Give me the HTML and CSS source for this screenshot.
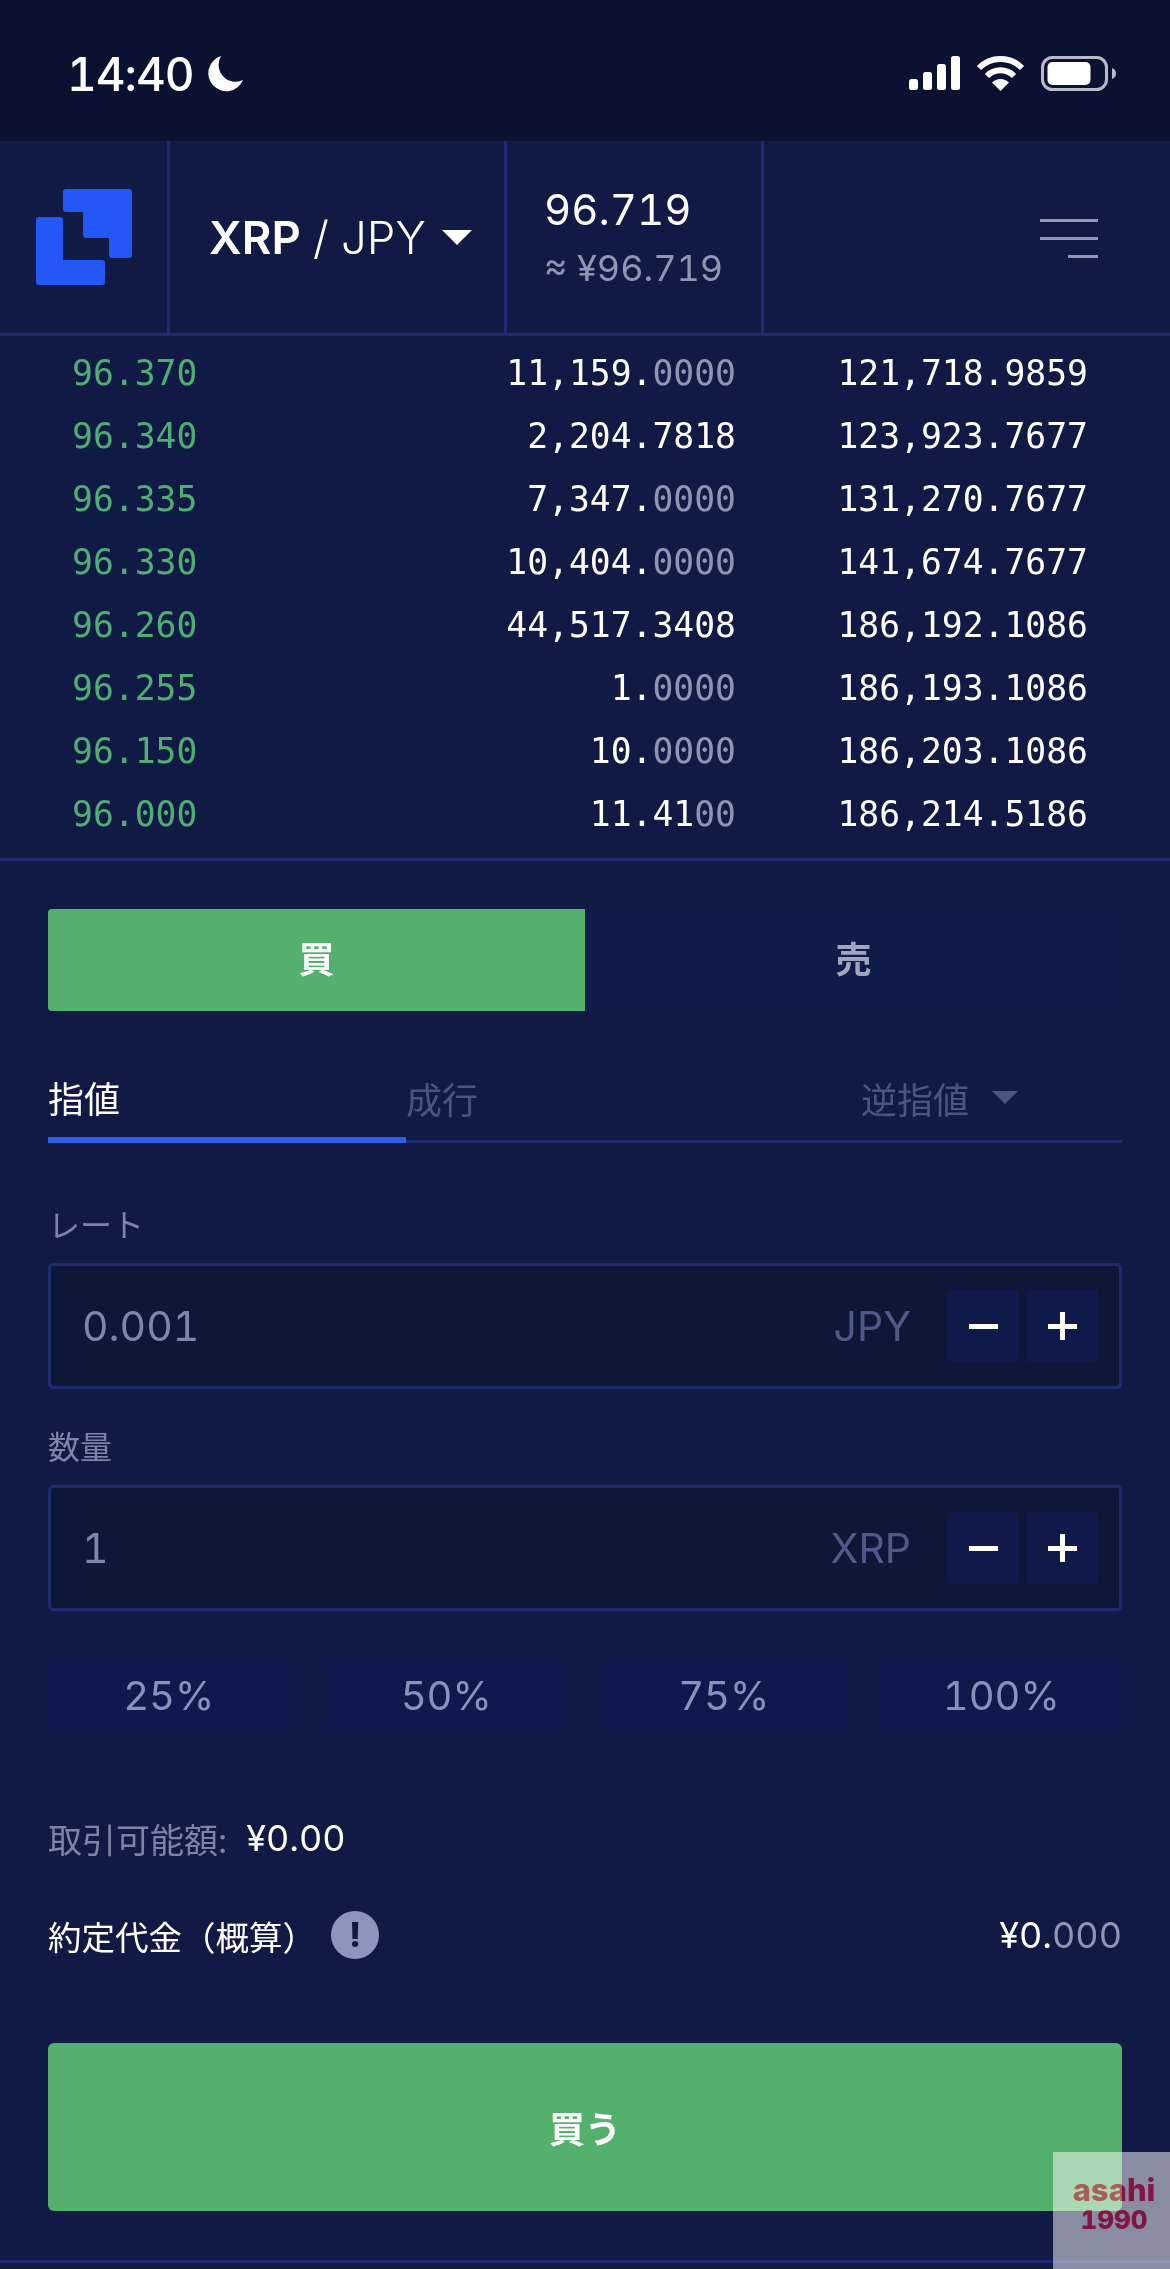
FILE: index.html
```html
<!DOCTYPE html>
<html lang="ja">
<head>
    <meta charset="UTF-8">
    <meta name="viewport" content="width=device-width, initial-scale=1.0">
    <title>XRP / JPY</title>
    <link rel="stylesheet" href="styles.css">
</head>
<body>
    <!-- Status bar -->
    <div class="status-bar">
        <div class="status-left">
            <span class="clock">14:40</span>
            <svg class="moon" width="36" height="36" viewBox="0 0 36 36"><path fill="#fff" d="M14 0A18 18 0 1 0 36 24A17 17 0 0 1 14 0Z"/></svg>
        </div>
        <div class="status-right">
            <svg width="51" height="34" viewBox="0 0 51 34" fill="#fff">
                <rect x="0" y="23" width="9" height="11" rx="2.5"/>
                <rect x="14" y="16" width="9" height="18" rx="2.5"/>
                <rect x="28" y="8" width="9" height="26" rx="2.5"/>
                <rect x="42" y="0" width="9" height="34" rx="2.5"/>
            </svg>
            <svg class="wifi" width="49" height="36" viewBox="0 0 49 36" fill="none" stroke="#fff">
                <path stroke-width="6" d="M3 13A30 30 0 0 1 46 13"/>
                <path stroke-width="6" d="M11 21A19 19 0 0 1 38 21"/>
                <path fill="#fff" stroke="none" d="M24.5 36L16 27.5A12 12 0 0 1 33 27.5Z"/>
            </svg>
            <svg class="battery" width="75" height="35" viewBox="0 0 75 35">
                <rect x="1.5" y="1.5" width="64" height="32" rx="10" fill="none" stroke="#b9bcc8" stroke-width="3"/>
                <rect x="6.5" y="6" width="43" height="23" rx="5" fill="#fff"/>
                <path fill="#b9bcc8" d="M71 12C74 13 75 15 75 17.500C75 20 74 22 71 23Z"/>
            </svg>
        </div>
    </div>

    <!-- Header -->
    <header class="top-bar">
        <div class="logo-cell">
            <svg width="96" height="96" viewBox="0 0 96 96" fill="#2458f6" stroke="#2458f6" stroke-width="6" stroke-linejoin="round">
                <path d="M30 3H93V66H76V46H50V20H30Z"/>
                <path d="M3 31H24V74H66V93H3Z"/>
            </svg>
        </div>
        <div class="pair-cell">
            <span class="pair"><b>XRP</b> / JPY</span>
            <span class="caret"></span>
        </div>
        <div class="price-cell">
            <div class="price">96.719</div>
            <div class="price-sub">≈ ¥96.719</div>
        </div>
        <div class="menu-cell">
            <span class="menu-line"></span>
            <span class="menu-line"></span>
            <span class="menu-line short"></span>
        </div>
    </header>

    <!-- Order book -->
    <div class="book">
        <div class="book-row"><span class="rate">96.370</span><span class="qty">11,159.<i>0000</i></span><span class="total">121,718.9859</span></div>
        <div class="book-row"><span class="rate">96.340</span><span class="qty">2,204.7818</span><span class="total">123,923.7677</span></div>
        <div class="book-row"><span class="rate">96.335</span><span class="qty">7,347.<i>0000</i></span><span class="total">131,270.7677</span></div>
        <div class="book-row"><span class="rate">96.330</span><span class="qty">10,404.<i>0000</i></span><span class="total">141,674.7677</span></div>
        <div class="book-row"><span class="rate">96.260</span><span class="qty">44,517.3408</span><span class="total">186,192.1086</span></div>
        <div class="book-row"><span class="rate">96.255</span><span class="qty">1.<i>0000</i></span><span class="total">186,193.1086</span></div>
        <div class="book-row"><span class="rate">96.150</span><span class="qty">10.<i>0000</i></span><span class="total">186,203.1086</span></div>
        <div class="book-row"><span class="rate">96.000</span><span class="qty">11.41<i>00</i></span><span class="total">186,214.5186</span></div>
    </div>

    <!-- Order form -->
    <main class="order">
        <div class="side-switch">
            <div class="side active">買</div>
            <div class="side">売</div>
        </div>

        <div class="type-tabs">
            <div class="type-tab current">指値</div>
            <div class="type-tab market">成行</div>
            <div class="type-tab stop">逆指値<span class="caret dim"></span></div>
        </div>

        <div class="field-label rate-label">レート</div>
        <div class="field">
            <span class="field-value">0.001</span>
            <span class="field-unit">JPY</span>
            <span class="step"><span class="minus"></span></span>
            <span class="step"><span class="plus"></span></span>
        </div>

        <div class="field-label qty-label">数量</div>
        <div class="field">
            <span class="field-value">1</span>
            <span class="field-unit">XRP</span>
            <span class="step"><span class="minus"></span></span>
            <span class="step"><span class="plus"></span></span>
        </div>

        <div class="percents">
            <div class="percent">25%</div>
            <div class="percent">50%</div>
            <div class="percent">75%</div>
            <div class="percent">100%</div>
        </div>

        <div class="available"><span class="available-label">取引可能額:</span><span class="available-value">¥0.00</span></div>

        <div class="estimate">
            <span class="estimate-label">約定代金（概算）</span>
            <span class="info">!</span>
            <span class="estimate-value">¥0.<i>000</i></span>
        </div>

        <button class="buy-btn" type="button">買う</button>
    </main>

    <div class="watermark"><span>asahi</span><span class="year">1990</span></div>
</body>
</html>
```

FILE: styles.css
```css
* {
    box-sizing: border-box;
}
body {
    margin: 0;
    height: 2269px;
    overflow: hidden;
    position: relative;
    background-color: #111a44;
    color: #fff;
    font-family: Inter, "Noto Sans CJK JP", sans-serif;
    font-feature-settings: "tnum";
}
i {
    font-style: normal;
    color: #8f96b3;
}

/* status bar */
.status-bar {
    height: 141px;
    background-color: #0b1130;
    display: flex;
    justify-content: space-between;
    align-items: flex-start;
    padding: 55px 54px 0 67px;
}
.status-left {
    display: flex;
    align-items: center;
    gap: 13px;
}
.clock {
    font-size: 46px;
    font-weight: 500;
    line-height: 38px;
    letter-spacing: -1px;
}
.status-right {
    display: flex;
    align-items: flex-start;
    gap: 16px;
    padding-top: 1px;
}
.wifi {
    margin-top: -1px;
}

/* header */
.top-bar {
    height: 195px;
    display: flex;
    border-bottom: 3px solid #1f2a70;
}
.logo-cell {
    flex: none;
    width: 170px;
    border-right: 3px solid #1f2a70;
    padding: 48px 0 0 36px;
}
.pair-cell {
    flex: none;
    width: 337px;
    border-right: 3px solid #1f2a70;
    padding-left: 39px;
    display: flex;
    align-items: center;
}
.pair {
    font-size: 45.5px;
    font-weight: 300;
    white-space: nowrap;
}
.pair b {
    font-weight: 600;
}
.caret {
    width: 0;
    height: 0;
    margin-left: 16px;
    border-left: 15px solid transparent;
    border-right: 15px solid transparent;
    border-top: 15px solid #fff;
}
.caret.dim {
    margin-left: 23px;
    border-left-width: 13px;
    border-right-width: 13px;
    border-top: 13px solid #4b557f;
}
.price-cell {
    flex: none;
    width: 257px;
    border-right: 3px solid #1f2a70;
    padding: 44px 0 0 37px;
}
.price {
    font-size: 42px;
    line-height: 50px;
}
.price-sub {
    font-size: 36px;
    line-height: 44px;
    margin-top: 11px;
    color: #8f96b3;
    white-space: nowrap;
}
.menu-cell {
    flex: 1;
    display: flex;
    flex-direction: column;
    align-items: flex-end;
    gap: 15px;
    padding: 78px 72px 0 0;
}
.menu-line {
    display: block;
    width: 58px;
    height: 3px;
    background-color: #9097b5;
}
.menu-line.short {
    width: 30px;
}

/* order book */
.book {
    height: 525px;
    padding-top: 6px;
    border-bottom: 3px solid #1f2a70;
    font-family: "DejaVu Sans Mono", monospace;
    font-size: 34.7px;
}
.book-row {
    height: 63px;
    line-height: 63px;
    display: flex;
    padding: 0 82px 0 72px;
}
.rate {
    color: #4fae72;
    width: 150px;
}
.qty {
    width: 514px;
    text-align: right;
}
.total {
    flex: 1;
    text-align: right;
}

/* order form */
.order {
    height: 1402px;
    padding: 48px 48px 0;
    border-bottom: 3px solid #1f2a70;
}
.side-switch {
    display: flex;
    height: 102px;
    background-color: #111b49;
    border-radius: 4px;
}
.side {
    flex: 1;
    display: flex;
    align-items: center;
    justify-content: center;
    padding-bottom: 6px;
    font-size: 36px;
    font-weight: 700;
    color: #a0a6bf;
}
.side.active {
    background-color: #54b16d;
    color: #fff;
    border-radius: 4px 0 0 4px;
}
.type-tabs {
    display: flex;
    height: 108px;
    margin-top: 24px;
    border-bottom: 3px solid #1f2a70;
    font-size: 36px;
}
.type-tab {
    height: 108px;
    display: flex;
    align-items: center;
    padding-top: 17px;
    color: #4b557f;
}
.type-tab.current {
    width: 358px;
    padding-top: 21px;
    color: #fff;
    border-bottom: 6px solid #2f5fe3;
}
.type-tab.market {
    width: 455px;
}
.field-label {
    font-size: 32px;
    line-height: 40px;
    color: #7d84a8;
}
.rate-label {
    margin-top: 63px;
}
.qty-label {
    margin-top: 39px;
}
.field {
    height: 126px;
    margin-top: 17px;
    display: flex;
    align-items: center;
    gap: 7px;
    padding: 0 21px 0 31px;
    background-color: #0f1739;
    border: 3px solid #1f2a70;
    border-radius: 5px;
}
.field-value {
    flex: 1;
    font-size: 41px;
    color: #7d87ad;
}
.field-unit {
    font-size: 41px;
    color: #4f5a86;
    margin-right: 29px;
}
.step {
    width: 72px;
    height: 72px;
    background-color: #0f194a;
    border-radius: 4px;
    display: flex;
    align-items: center;
    justify-content: center;
    position: relative;
}
.minus, .plus {
    display: block;
    width: 29px;
    height: 5px;
    background-color: #fff;
}
.plus::after {
    content: "";
    position: absolute;
    left: 34px;
    top: 22px;
    width: 5px;
    height: 28px;
    background-color: #fff;
}
.percents {
    display: flex;
    gap: 36px;
    margin-top: 48px;
}
.percent {
    flex: 1;
    height: 73px;
    background-color: #0f194d;
    border-radius: 4px;
    display: flex;
    align-items: center;
    justify-content: center;
    font-size: 40px;
    color: #8a92ba;
}
.available {
    display: flex;
    align-items: center;
    height: 48px;
    margin-top: 82px;
}
.available-label {
    font-size: 34px;
    color: #7d84a8;
}
.available-value {
    font-size: 36px;
    margin-left: 19px;
}
.estimate {
    display: flex;
    align-items: center;
    height: 48px;
    margin-top: 49px;
}
.estimate-label {
    font-size: 33.5px;
}
.info {
    width: 48px;
    height: 48px;
    margin-left: 15px;
    border-radius: 50%;
    background-color: #8d95bd;
    color: #111a44;
    font-size: 34px;
    font-weight: 800;
    line-height: 48px;
    text-align: center;
}
.estimate-value {
    margin-left: auto;
    font-size: 36px;
}
.buy-btn {
    display: block;
    width: 100%;
    height: 168px;
    margin-top: 84px;
    background-color: #54b16d;
    border: none;
    border-radius: 6px;
    color: #fff;
    font-family: inherit;
    font-size: 36px;
    font-weight: 700;
}

/* semi transparent stamp over the page corner */
.watermark {
    position: absolute;
    left: 1053px;
    top: 2152px;
    width: 117px;
    height: 117px;
    padding: 22px 0 0 5px;
    background-color: rgba(255, 255, 255, 0.5);
    display: flex;
    flex-direction: column;
    align-items: center;
    font-family: Inter, sans-serif;
    font-weight: 800;
    font-size: 31px;
    line-height: 32px;
    color: #04785f;
}
.watermark span {
    mix-blend-mode: difference;
}
.watermark .year {
    font-size: 26px;
    line-height: 27px;
}
```
